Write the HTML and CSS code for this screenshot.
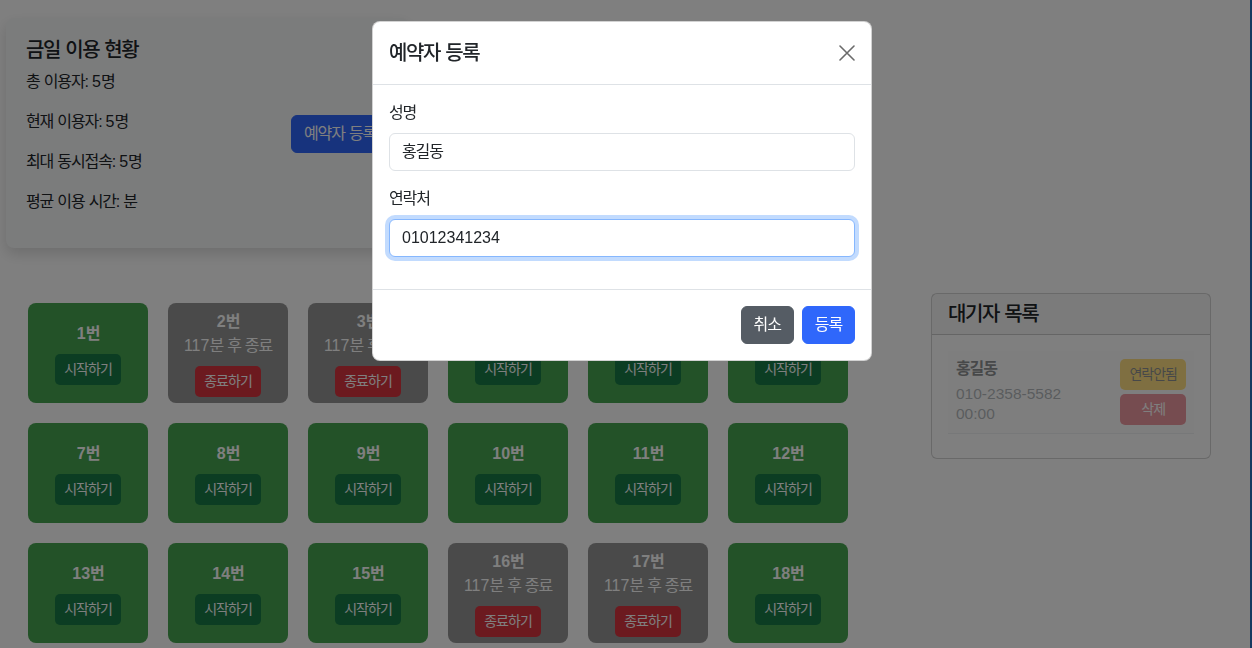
FILE: index.html
```html
<!DOCTYPE html>
<html lang="ko">
<head>
<meta charset="utf-8">
<title>좌석 관리</title>
<link rel="stylesheet" href="styles.css">
</head>
<body>
<div class="page">
  <section class="stats-card">
    <div class="stats">
      <h5 class="stats-title">금일 이용 현황</h5>
      <p>총 이용자: <span class="n">5</span>명</p>
      <p>현재 이용자: <span class="n">5</span>명</p>
      <p>최대 동시접속: <span class="n">5</span>명</p>
      <p>평균 이용 시간: 분</p>
    </div>
    <button class="btn btn-primary">예약자 등록</button>
  </section>

  <div class="main">
    <div class="seats">
      <div class="seat free"><div class="seat-no"><span class="n">1</span>번</div><button class="btn-sm btn-start">시작하기</button></div>
      <div class="seat busy"><div class="seat-no"><span class="n">2</span>번</div><div class="seat-status"><span class="n">117</span>분 후 종료</div><button class="btn-sm btn-end">종료하기</button></div>
      <div class="seat busy"><div class="seat-no"><span class="n">3</span>번</div><div class="seat-status"><span class="n">117</span>분 후 종료</div><button class="btn-sm btn-end">종료하기</button></div>
      <div class="seat free"><div class="seat-no"><span class="n">4</span>번</div><button class="btn-sm btn-start">시작하기</button></div>
      <div class="seat free"><div class="seat-no"><span class="n">5</span>번</div><button class="btn-sm btn-start">시작하기</button></div>
      <div class="seat free"><div class="seat-no"><span class="n">6</span>번</div><button class="btn-sm btn-start">시작하기</button></div>

      <div class="seat free"><div class="seat-no"><span class="n">7</span>번</div><button class="btn-sm btn-start">시작하기</button></div>
      <div class="seat free"><div class="seat-no"><span class="n">8</span>번</div><button class="btn-sm btn-start">시작하기</button></div>
      <div class="seat free"><div class="seat-no"><span class="n">9</span>번</div><button class="btn-sm btn-start">시작하기</button></div>
      <div class="seat free"><div class="seat-no"><span class="n">10</span>번</div><button class="btn-sm btn-start">시작하기</button></div>
      <div class="seat free"><div class="seat-no"><span class="n">11</span>번</div><button class="btn-sm btn-start">시작하기</button></div>
      <div class="seat free"><div class="seat-no"><span class="n">12</span>번</div><button class="btn-sm btn-start">시작하기</button></div>

      <div class="seat free"><div class="seat-no"><span class="n">13</span>번</div><button class="btn-sm btn-start">시작하기</button></div>
      <div class="seat free"><div class="seat-no"><span class="n">14</span>번</div><button class="btn-sm btn-start">시작하기</button></div>
      <div class="seat free"><div class="seat-no"><span class="n">15</span>번</div><button class="btn-sm btn-start">시작하기</button></div>
      <div class="seat busy"><div class="seat-no"><span class="n">16</span>번</div><div class="seat-status"><span class="n">117</span>분 후 종료</div><button class="btn-sm btn-end">종료하기</button></div>
      <div class="seat busy"><div class="seat-no"><span class="n">17</span>번</div><div class="seat-status"><span class="n">117</span>분 후 종료</div><button class="btn-sm btn-end">종료하기</button></div>
      <div class="seat free"><div class="seat-no"><span class="n">18</span>번</div><button class="btn-sm btn-start">시작하기</button></div>
    </div>

    <aside class="waiting">
      <div class="waiting-head"><h5 class="waiting-title">대기자 목록</h5></div>
      <div class="waiting-body">
        <div class="waiting-item">
          <div class="waiting-info">
            <div class="waiting-name">홍길동</div>
            <div class="waiting-line n">010-2358-5582</div>
            <div class="waiting-line n">00:00</div>
          </div>
          <div class="waiting-actions">
            <button class="btn-sm btn-warn">연락안됨</button>
            <button class="btn-sm btn-del">삭제</button>
          </div>
        </div>
      </div>
    </aside>
  </div>
</div>

<div class="backdrop"></div>

<div class="modal">
  <div class="modal-header">
    <h5 class="modal-title">예약자 등록</h5>
    <button class="btn-close" aria-label="닫기">
      <svg width="16" height="16" viewBox="0 0 16 16"><path d="M1 1 L15 15 M15 1 L1 15" stroke="#6b6b6b" stroke-width="1.6" stroke-linecap="round" fill="none"/></svg>
    </button>
  </div>
  <div class="modal-body">
    <div class="field">
      <label class="form-label">성명</label>
      <input class="form-control" type="text" value="홍길동">
    </div>
    <div class="field">
      <label class="form-label">연락처</label>
      <input class="form-control focused num-input" type="text" value="01012341234">
    </div>
  </div>
  <div class="modal-footer">
    <button class="btn btn-secondary">취소</button>
    <button class="btn btn-primary">등록</button>
  </div>
</div>
</body>
</html>
```

FILE: styles.css
```css
* {
  box-sizing: border-box;
  letter-spacing: -0.07em;
  word-spacing: 0.05em;
}

html {
  min-height: 100%;
  border-right: 2px solid #2f74c0;
}

body {
  margin: 0;
  font-family: "Liberation Sans", "Noto Sans CJK KR", sans-serif;
  font-size: 16px;
  line-height: 1.5;
  color: #212529;
  background: #fff;
}

.n {
  letter-spacing: 0;
}

.page {
  padding: 18px 0 0 6px;
}

/* ---------- buttons ---------- */
.btn {
  font-family: inherit;
  font-size: 16px;
  line-height: 1.5;
  padding: 6px 12px;
  border: 1px solid transparent;
  border-radius: 6px;
  color: #fff;
  cursor: pointer;
}

.btn-primary {
  background: #2f67fb;
  border-color: #2f67fb;
}

.btn-secondary {
  background: #555c64;
  border-color: #555c64;
}

.btn-sm {
  font-family: inherit;
  font-size: 14px;
  line-height: 1.5;
  padding: 4px 8px;
  border: 1px solid transparent;
  border-radius: 5px;
  color: #fff;
  cursor: pointer;
}

.btn-start {
  background: #187a47;
}

.btn-end {
  background: #d9343f;
}

.btn-warn {
  background: #ffc107;
  color: #212529;
}

.btn-del {
  background: #dc3545;
}

/* ---------- stats card ---------- */
.stats-card {
  display: inline-flex;
  align-items: center;
  padding: 20px 20px 18px;
  background: #f7f8f9;
  border-radius: 8px;
  box-shadow: 0 6px 14px rgba(0, 0, 0, 0.14);
}

.stats {
  width: 245px;
  margin-right: 20px;
}

.stats-title {
  margin: 0 0 8px;
  font-size: 20px;
  font-weight: 500;
  line-height: 1.2;
}

.stats p {
  margin: 0 0 16px;
}

/* ---------- main ---------- */
.main {
  display: flex;
  align-items: flex-start;
  margin-top: 45px;
}

.seats {
  display: grid;
  grid-template-columns: repeat(6, 120px);
  grid-auto-rows: 100px;
  gap: 20px;
  padding: 10px 0 0 22px;
}

.seat {
  display: flex;
  flex-direction: column;
  align-items: center;
  justify-content: center;
  border-radius: 8px;
  color: #fff;
}

.seat.free {
  background: #46a450;
}

.seat.busy {
  background: #949494;
}

.seat-no {
  font-weight: 700;
}

.seat .btn-sm {
  margin-top: 8px;
}

/* ---------- waiting list ---------- */
.waiting {
  width: 280px;
  margin-left: 83px;
  border: 1px solid rgba(0, 0, 0, 0.175);
  border-radius: 6px;
  background: #fff;
}

.waiting-head {
  padding: 8px 16px;
  background: rgba(0, 0, 0, 0.03);
  border-bottom: 1px solid rgba(0, 0, 0, 0.175);
}

.waiting-title {
  margin: 0;
  font-size: 20px;
  font-weight: 500;
  line-height: 1.2;
}

.waiting-body {
  padding: 16px;
}

.waiting-item {
  display: flex;
  justify-content: space-between;
  align-items: flex-start;
  padding: 8px;
  margin-bottom: 8px;
  background: #fdfdfd;
  border-bottom: 1px solid #dee2e6;
  opacity: 0.5;
}

.waiting-name {
  font-weight: 700;
  line-height: 20px;
  margin-bottom: 5px;
}

.waiting-line {
  color: #6c757d;
  font-size: 15.5px;
  line-height: 20px;
}

.waiting-actions {
  display: flex;
  flex-direction: column;
  gap: 4px;
}

/* ---------- modal ---------- */
.backdrop {
  position: fixed;
  inset: 0;
  background: rgba(0, 0, 0, 0.5);
}

.modal {
  position: fixed;
  top: 21px;
  left: 372px;
  width: 500px;
  background: #fff;
  border: 1px solid rgba(0, 0, 0, 0.175);
  border-radius: 8px;
}

.modal-header {
  display: flex;
  align-items: center;
  justify-content: space-between;
  padding: 16px;
  border-bottom: 1px solid #dee2e6;
}

.modal-title {
  margin: 0;
  font-size: 20px;
  font-weight: 500;
  line-height: 1.5;
}

.btn-close {
  display: flex;
  padding: 0;
  margin-right: 0;
  border: 0;
  background: transparent;
  cursor: pointer;
}

.modal-body {
  padding: 16px;
}

.field {
  margin-bottom: 16px;
}

.form-label {
  display: block;
  margin-bottom: 8px;
}

.form-control {
  display: block;
  width: 100%;
  padding: 6px 12px;
  font-family: inherit;
  font-size: 16px;
  line-height: 1.5;
  color: #212529;
  background: #fff;
  border: 1px solid #dee2e6;
  border-radius: 6px;
  outline: none;
}

.form-control.focused {
  border-color: #86b7fe;
  box-shadow: 0 0 0 4px rgba(13, 110, 253, 0.25);
}

.num-input {
  letter-spacing: 0;
}

.modal-footer {
  display: flex;
  justify-content: flex-end;
  gap: 8px;
  padding: 16px;
  border-top: 1px solid #dee2e6;
}
```
